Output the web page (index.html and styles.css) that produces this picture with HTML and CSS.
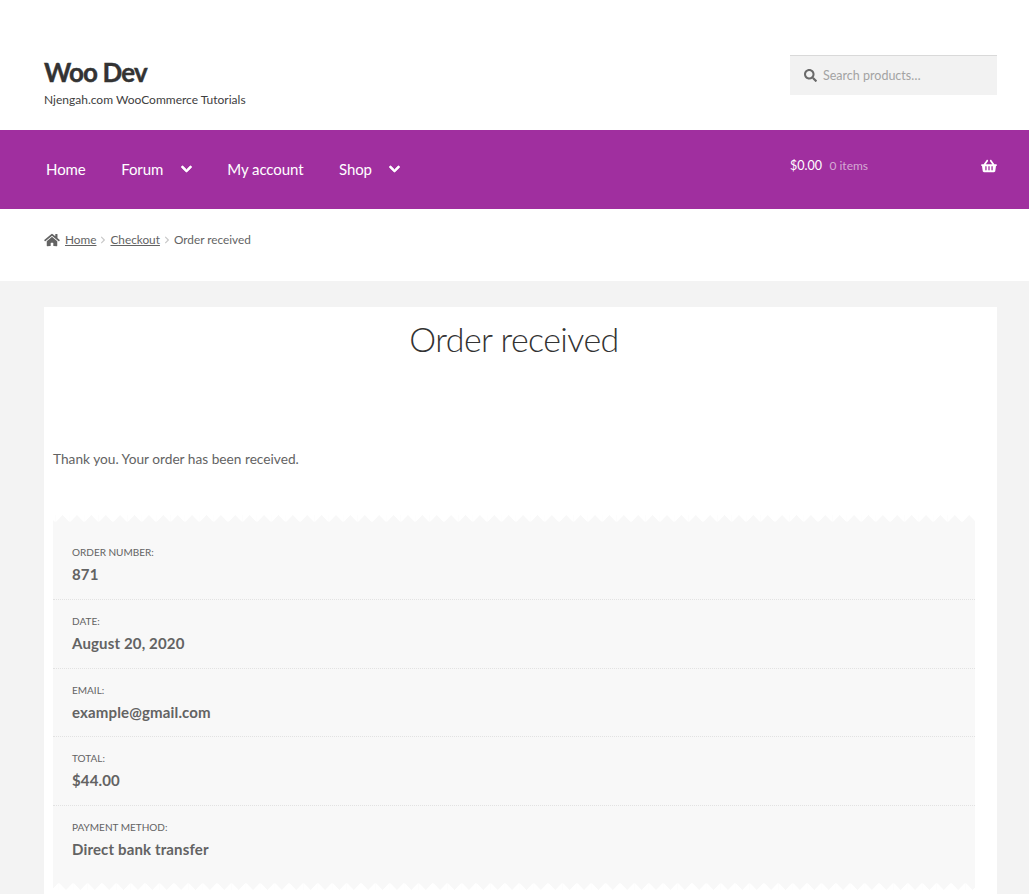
FILE: index.html
```html
<!DOCTYPE html>
<html lang="en">
<head>
<meta charset="utf-8">
<title>Order received – Woo Dev</title>
<link rel="stylesheet" href="styles.css">
</head>
<body>
<header class="masthead">
  <div class="branding">
    <h1 class="site-title">Woo Dev</h1>
    <p class="tagline">Njengah.com WooCommerce Tutorials</p>
  </div>
  <form class="search">
    <svg class="search-icon" viewBox="0 0 512 512"><path d="M505 442.7L405.3 343c-4.5-4.5-10.6-7-17-7H372c27.6-35.3 44-79.7 44-128C416 93.1 322.9 0 208 0S0 93.1 0 208s93.1 208 208 208c48.3 0 92.7-16.4 128-44v16.3c0 6.4 2.5 12.5 7 17l99.7 99.7c9.4 9.4 24.6 9.4 33.9 0l28.3-28.3c9.4-9.4 9.4-24.6.1-34zM208 336c-70.7 0-128-57.2-128-128 0-70.7 57.2-128 128-128 70.7 0 128 57.2 128 128 0 70.7-57.2 128-128 128z"/></svg>
    <span class="placeholder">Search products…</span>
  </form>
</header>
<nav class="navbar">
  <ul class="menu">
    <li><a href="#">Home</a></li>
    <li><a href="#">Forum</a><svg class="chev" viewBox="0 0 448 512"><path d="M207.029 381.476L12.686 187.132c-9.373-9.373-9.373-24.569 0-33.941l22.667-22.667c9.357-9.357 24.522-9.375 33.901-.04L224 284.505l154.745-154.021c9.379-9.335 24.544-9.317 33.901.04l22.667 22.667c9.373 9.373 9.373 24.569 0 33.941L240.971 381.476c-9.373 9.372-24.569 9.372-33.942 0z"/></svg></li>
    <li><a href="#">My account</a></li>
    <li><a href="#">Shop</a><svg class="chev" viewBox="0 0 448 512"><path d="M207.029 381.476L12.686 187.132c-9.373-9.373-9.373-24.569 0-33.941l22.667-22.667c9.357-9.357 24.522-9.375 33.901-.04L224 284.505l154.745-154.021c9.379-9.335 24.544-9.317 33.901.04l22.667 22.667c9.373 9.373 9.373 24.569 0 33.941L240.971 381.476c-9.373 9.372-24.569 9.372-33.942 0z"/></svg></li>
  </ul>
  <a class="cart" href="#">
    <span class="amount">$0.00</span>
    <span class="count">0 items</span>
    <svg class="basket" viewBox="0 0 576 512"><path d="M576 216v16c0 13.255-10.745 24-24 24h-8l-26.113 182.788C514.509 462.435 494.257 480 470.37 480H105.63c-23.887 0-44.139-17.565-47.518-41.212L32 256h-8c-13.255 0-24-10.745-24-24v-16c0-13.255 10.745-24 24-24h67.341l106.78-146.821c10.395-14.292 30.407-17.453 44.701-7.058 14.293 10.395 17.453 30.408 7.058 44.701L170.477 192h235.046L326.12 82.821c-10.395-14.292-7.234-34.306 7.059-44.701 14.291-10.395 34.306-7.235 44.701 7.058L484.659 192H552c13.255 0 24 10.745 24 24zM312 392V280c0-13.255-10.745-24-24-24s-24 10.745-24 24v112c0 13.255 10.745 24 24 24s24-10.745 24-24zm112 0V280c0-13.255-10.745-24-24-24s-24 10.745-24 24v112c0 13.255 10.745 24 24 24s24-10.745 24-24zm-224 0V280c0-13.255-10.745-24-24-24s-24 10.745-24 24v112c0 13.255 10.745 24 24 24s24-10.745 24-24z"/></svg>
  </a>
</nav>
<div class="breadcrumb">
  <svg class="home-icon" viewBox="0 0 576 512"><path d="M280.37 148.26L96 300.11V464a16 16 0 0 0 16 16l112.06-.29a16 16 0 0 0 15.92-16V368a16 16 0 0 1 16-16h64a16 16 0 0 1 16 16v95.64a16 16 0 0 0 16 16.05L464 480a16 16 0 0 0 16-16V300L295.67 148.26a12.19 12.19 0 0 0-15.3 0zM571.6 251.47L488 182.56V44.05a12 12 0 0 0-12-12h-56a12 12 0 0 0-12 12v72.61L318.47 43a48 48 0 0 0-61 0L4.34 251.47a12 12 0 0 0-1.6 16.9l25.5 31A12 12 0 0 0 45.15 301l235.22-193.74a12.19 12.19 0 0 1 15.3 0L530.9 301a12 12 0 0 0 16.9-1.6l25.5-31a12 12 0 0 0-1.7-16.93z"/></svg>
  <a href="#">Home</a>
  <svg class="sep" viewBox="0 0 320 512"><path d="M285.476 272.971L91.132 467.314c-9.373 9.373-24.569 9.373-33.941 0l-22.667-22.667c-9.357-9.357-9.375-24.522-.04-33.901L188.505 256 34.484 101.255c-9.335-9.379-9.317-24.544.04-33.901l22.667-22.667c9.373-9.373 24.569-9.373 33.941 0L285.475 239.03c9.373 9.372 9.373 24.568.001 33.941z"/></svg>
  <a href="#">Checkout</a>
  <svg class="sep" viewBox="0 0 320 512"><path d="M285.476 272.971L91.132 467.314c-9.373 9.373-24.569 9.373-33.941 0l-22.667-22.667c-9.357-9.357-9.375-24.522-.04-33.901L188.505 256 34.484 101.255c-9.335-9.379-9.317-24.544.04-33.901l22.667-22.667c9.373-9.373 24.569-9.373 33.941 0L285.475 239.03c9.373 9.372 9.373 24.568.001 33.941z"/></svg>
  <span>Order received</span>
</div>
<main class="page-body">
  <article class="card">
    <h2 class="page-title">Order received</h2>
    <p class="thanks">Thank you. Your order has been received.</p>
    <ul class="receipt">
      <li class="row"><span class="label">ORDER NUMBER:</span><strong class="value">871</strong></li>
      <li class="row"><span class="label">DATE:</span><strong class="value">August 20, 2020</strong></li>
      <li class="row"><span class="label">EMAIL:</span><strong class="value">example@gmail.com</strong></li>
      <li class="row"><span class="label">TOTAL:</span><strong class="value">$44.00</strong></li>
      <li class="row"><span class="label">PAYMENT METHOD:</span><strong class="value">Direct bank transfer</strong></li>
    </ul>
  </article>
</main>
</body>
</html>
```
FILE: styles.css
```css
* { box-sizing: border-box; }
html, body { margin: 0; padding: 0; height: 894px; overflow: hidden; }
body {
  font-family: Lato, "Noto Sans", "Liberation Sans", sans-serif;
  color: #636363;
  background: #f3f3f3;
}
a { color: inherit; }
ul { list-style: none; margin: 0; padding: 0; }

.masthead {
  height: 130px;
  background: #fff;
  padding: 55px 32px 0 44px;
  display: flex;
  justify-content: space-between;
  align-items: flex-start;
}
.site-title {
  margin: 0;
  font-size: 26px;
  line-height: 34px;
  font-weight: 700;
  color: #333;
  letter-spacing: -0.85px;
  -webkit-text-stroke: 0.4px #333;
}
.tagline {
  margin: 2px 0 0;
  font-size: 12px;
  line-height: 18px;
  color: #404040;
}
.search {
  width: 207px;
  height: 40px;
  background: #f2f2f2;
  border-top: 1px solid #d9d9d9;
  display: flex;
  align-items: center;
  padding-left: 14px;
  gap: 6px;
}
.search-icon { width: 13px; height: 13px; fill: #6a6a6a; }
.placeholder { font-size: 12.5px; color: #a3a3a3; }

.navbar {
  height: 79px;
  background: #a02f9f;
  padding: 0 32px 0 46px;
  display: flex;
  justify-content: space-between;
  align-items: flex-start;
  color: #fff;
}
.menu { display: flex; padding-top: 29px; }
.menu li { display: flex; align-items: center; height: 20px; margin-right: 35.5px; }
.menu a { color: #fff; text-decoration: none; font-size: 15px; line-height: 20px; letter-spacing: -0.08px; }
.chev { width: 11px; height: 12px; fill: #fff; stroke: #fff; stroke-width: 35; margin-left: 17.5px; }
.cart {
  width: 207px;
  display: flex;
  align-items: center;
  height: 20px;
  margin-top: 25px;
  text-decoration: none;
}
.amount { font-size: 12.5px; color: #fff; }
.count { font-size: 12px; color: #d5a9d4; margin-left: 7.5px; }
.basket { width: 16px; height: 14px; fill: #fff; margin-left: auto; margin-top: 1px; }

.breadcrumb {
  height: 72px;
  background: #fff;
  padding: 0 0 11px 44px;
  display: flex;
  align-items: center;
  font-size: 11.8px;
  color: #636363;
}
.home-icon { width: 16px; height: 14px; fill: #636363; margin-right: 5px; }
.sep { width: 6px; height: 8px; fill: #c9c9c9; margin: 0 4px; }

.page-body { padding: 26px 32px 0 44px; }
.card { background: #fff; padding: 0 22px 0 9px; height: 600px; }
.page-title {
  margin: 0;
  padding-top: 10px;
  font-size: 34px;
  line-height: 44px;
  font-weight: 300;
  color: #333;
  text-align: center;
  letter-spacing: -0.58px;
}
.thanks {
  margin: 0;
  padding-top: 88px;
  font-size: 13.7px;
  line-height: 20px;
  color: #636363;
}
.receipt {
  position: relative;
  margin-top: 46px;
  padding-top: 16px;
  height: 375px;
  background: #f8f8f8;
}
.receipt::before, .receipt::after {
  content: "";
  position: absolute;
  left: 0;
  right: 0;
  height: 7.2px;
  background-size: 14.4px 7.2px;
  background-repeat: repeat-x;
}
.receipt::before {
  top: 0;
  background-position: 2.4px 0;
  background-image:
    linear-gradient(135deg, #fff 5.04px, transparent 5.14px),
    linear-gradient(225deg, #fff 5.04px, transparent 5.14px);
}
.receipt::after {
  bottom: 0;
  background-position: 5.8px 0;
  background-image:
    linear-gradient(45deg, #fff 5.04px, transparent 5.14px),
    linear-gradient(315deg, #fff 5.04px, transparent 5.14px);
}
.row {
  height: 68.75px;
  padding: 14px 0 0 19px;
  border-bottom: 1px dotted #e2e2e2;
  display: flex;
  flex-direction: column;
}
.row:last-child { border-bottom: 0; }
.label { font-size: 10px; line-height: 14px; color: #636363; }
.value { font-size: 15px; line-height: 20px; margin-top: 5px; font-weight: 700; color: #636363; letter-spacing: 0.15px; }
```
